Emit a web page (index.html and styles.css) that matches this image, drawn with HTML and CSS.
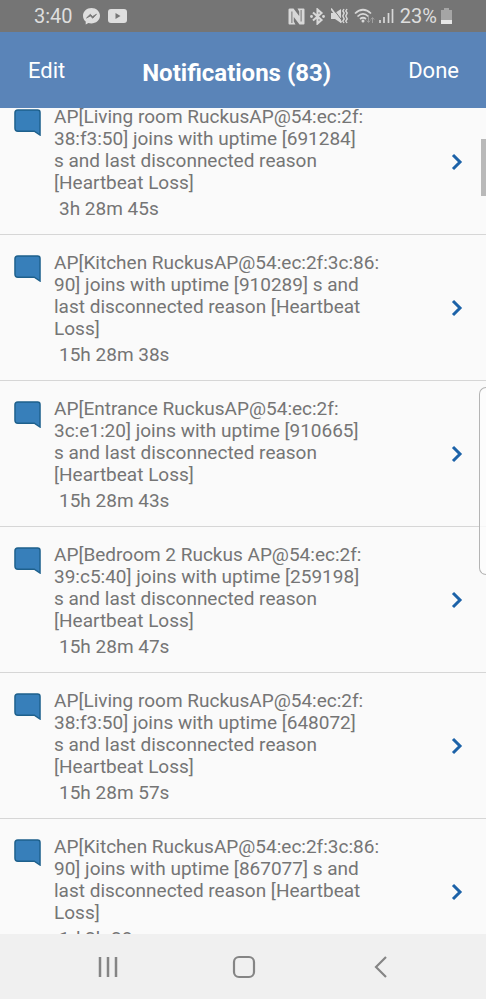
FILE: index.html
```html
<!DOCTYPE html>
<html lang="en">
<head>
<meta charset="utf-8">
<meta name="viewport" content="width=device-width, initial-scale=1">
<title>Notifications</title>
<link rel="stylesheet" href="styles.css">
</head>
<body>
<svg class="defs" aria-hidden="true">
  <symbol id="bubble" viewBox="0 0 28 28"><path d="M4 1H24.500Q27 1 27 3.500V27L21 23H4Q1 23 1 20V4Q1 1 4 1Z" fill="#377fba" stroke="#1e608c" stroke-width="1.500"/></symbol>
  <symbol id="chevron" viewBox="0 0 12 18"><path d="M2 2L9 9L2 16" fill="none" stroke="#1c62a8" stroke-width="3"/></symbol>
</svg>
<div class="status">
  <span class="status-text">3:40</span>
  <svg class="messenger" width="17" height="17" viewBox="0 0 17 17"><path d="M8.500 0C3.700 0 0 3.400 0 7.800C0 10.200 1 12.200 2.700 13.600V16.600L5.400 15.100C11.500 16.700 17 13 17 7.800C17 3.400 13.300 0 8.500 0Z" fill="#dedede"/><path d="M3.500 10L7.300 6.300L9.600 8.500L13.500 6.200L9.800 10.200L7.400 8Z" fill="#757575" stroke="#757575" stroke-width=".8"/></svg>
  <svg width="19" height="14" viewBox="0 0 19 14"><rect width="19" height="14" rx="3" fill="#dedede"/><path d="M7.500 4V10L12.500 7Z" fill="#757575"/></svg>
  <span class="spacer"></span>
  <svg width="17" height="17" viewBox="0 0 17 17"><path d="M2 .5H5.500L11.200 8V3.500L9.500 .5H15.500Q16.500 .5 16.500 1.500V15.500Q16.500 16.500 15.500 16.500H11.500L5.800 9V13.500L7.500 16.500H1.500Q.5 16.500 .5 15.500V1.500Q.5 .5 2 .5Z" fill="#d8d8d8"/><path d="M3.900 15V3.500M13.100 2V13.500" stroke="#757575" stroke-width="1"/></svg>
  <svg class="bluetooth" width="15" height="17" viewBox="0 0 15 17"><path d="M3 4.500L11.500 12L7.500 15.500V1.500L11.500 5L3 12.500" fill="none" stroke="#d8d8d8" stroke-width="2.100"/><circle cx="1.500" cy="8.500" r="1.400" fill="#d8d8d8"/><circle cx="13.500" cy="8.500" r="1.400" fill="#d8d8d8"/></svg>
  <svg class="mute" width="17" height="16" viewBox="0 0 17 16"><path d="M0 5H4L10 1V15L4 11H0Z" fill="#d8d8d8"/><path d="M1.500 0L11 12.500" stroke="#757575" stroke-width="1"/><path d="M0 .5L10.500 14.500" stroke="#d8d8d8" stroke-width="1.700"/><path d="M13 1L11.800 3L13.200 5L11.800 8L13.200 11L11.800 13L13 15M16 1L14.800 3L16.200 5L14.800 8L16.200 11L14.800 13L16 15" fill="none" stroke="#d8d8d8" stroke-width="1.400"/></svg>
  <svg class="wifi" width="21" height="16" viewBox="0 0 21 16"><path d="M1 5.500Q9 -2 17 5.500M3.500 8.500Q9 3 14.500 8.500M6 11Q9 8.500 12 11" fill="none" stroke="#d8d8d8" stroke-width="1.700"/><circle cx="9" cy="13" r="1.500" fill="#d8d8d8"/><path d="M14.500 9V14M12.800 12.500L14.500 14.500L16.200 12.500M18.500 15V10M16.800 11.500L18.500 9.500L20.200 11.500" fill="none" stroke="#a0a0a0"/></svg>
  <svg class="signal" width="15" height="16" viewBox="0 0 15 16"><path d="M1 12V15M5 9V15M9.500 5V15M13.500 1V15" stroke="#d8d8d8" stroke-width="1.700"/></svg>
  <span class="status-text">23%</span>
  <svg class="battery" width="11" height="16" viewBox="0 0 11 16"><path d="M0 2H3V0H8V2H11V16H0Z" fill="#a5a5a5"/><path d="M0 12H11V16H0Z" fill="#e6e6e6"/></svg>
</div>
<header class="bar">
  <button class="bar-button">Edit</button>
  <h1>Notifications (83)</h1>
  <button class="bar-button">Done</button>
</header>
<main class="viewport">
  <ul class="list">
    <li><a class="row" href="#"><svg class="bubble"><use href="#bubble"/></svg><div class="body"><p>AP[Living room RuckusAP@54:ec:2f:<br>38:f3:50] joins with uptime [691284]<br>s and last disconnected reason<br>[Heartbeat Loss]</p><time>3h 28m 45s</time></div><svg class="chevron"><use href="#chevron"/></svg></a></li>
    <li><a class="row" href="#"><svg class="bubble"><use href="#bubble"/></svg><div class="body"><p>AP[Kitchen RuckusAP@54:ec:2f:3c:86:<br>90] joins with uptime [910289] s and<br>last disconnected reason [Heartbeat<br>Loss]</p><time>15h 28m 38s</time></div><svg class="chevron"><use href="#chevron"/></svg></a></li>
    <li><a class="row" href="#"><svg class="bubble"><use href="#bubble"/></svg><div class="body"><p>AP[Entrance RuckusAP@54:ec:2f:<br>3c:e1:20] joins with uptime [910665]<br>s and last disconnected reason<br>[Heartbeat Loss]</p><time>15h 28m 43s</time></div><svg class="chevron"><use href="#chevron"/></svg></a></li>
    <li><a class="row" href="#"><svg class="bubble"><use href="#bubble"/></svg><div class="body"><p>AP[Bedroom 2 Ruckus AP@54:ec:2f:<br>39:c5:40] joins with uptime [259198]<br>s and last disconnected reason<br>[Heartbeat Loss]</p><time>15h 28m 47s</time></div><svg class="chevron"><use href="#chevron"/></svg></a></li>
    <li><a class="row" href="#"><svg class="bubble"><use href="#bubble"/></svg><div class="body"><p>AP[Living room RuckusAP@54:ec:2f:<br>38:f3:50] joins with uptime [648072]<br>s and last disconnected reason<br>[Heartbeat Loss]</p><time>15h 28m 57s</time></div><svg class="chevron"><use href="#chevron"/></svg></a></li>
    <li><a class="row" href="#"><svg class="bubble"><use href="#bubble"/></svg><div class="body"><p>AP[Kitchen RuckusAP@54:ec:2f:3c:86:<br>90] joins with uptime [867077] s and<br>last disconnected reason [Heartbeat<br>Loss]</p><time>1d 2h 28m</time></div><svg class="chevron"><use href="#chevron"/></svg></a></li>
  </ul>
  <div class="scroll-thumb"></div>
  <div class="edge-handle"></div>
</main>
<nav class="nav">
  <button aria-label="Recents"><svg width="24" height="24" viewBox="0 0 24 24"><path d="M4 2V22M12 2V22M20 2V22" stroke="#858585" stroke-width="2.500"/></svg></button>
  <button aria-label="Home"><svg width="24" height="24" viewBox="0 0 24 24"><rect x="2" y="2" width="20" height="20" rx="5" fill="none" stroke="#858585" stroke-width="2.200"/></svg></button>
  <button aria-label="Back"><svg width="24" height="24" viewBox="0 0 24 24"><path d="M17 2L7 12L17 22" fill="none" stroke="#858585" stroke-width="2.200"/></svg></button>
</nav>
</body>
</html>
```
FILE: styles.css
```css
* {
  box-sizing: border-box;
}

body {
  margin: 0;
  height: 100vh;
  display: flex;
  flex-direction: column;
  overflow: hidden;
  background: #fafafa;
  color: #757575;
  font-family: Roboto, "Liberation Sans", sans-serif;
}

svg {
  flex: none;
}

.defs {
  display: none;
}

button {
  border: 0;
  padding: 0;
  background: none;
  color: inherit;
  font: inherit;
}

.status {
  flex: none;
  height: 32px;
  padding: 0 34px;
  display: flex;
  align-items: center;
  background: #757575;
}

.status-text {
  color: #dedede;
  font-size: 20px;
  line-height: 32px;
}

.messenger {
  margin: 0 8px 0 10px;
}

.spacer {
  flex: 1;
}

.bluetooth {
  margin-left: 5px;
}

.mute,
.wifi {
  margin-left: 6px;
}

.signal {
  margin: 0 6px 0 4px;
}

.battery {
  margin-left: 4px;
}

.bar {
  flex: none;
  height: 76px;
  padding: 2px 27px 0 28px;
  display: flex;
  justify-content: space-between;
  align-items: center;
  background: #5a84b8;
  color: #fff;
}

.bar h1 {
  margin: 4px 0 0;
  font-size: 24px;
  line-height: 28px;
  font-weight: 700;
}

.bar-button {
  font-size: 22px;
  line-height: 28px;
}

.viewport {
  flex: 1;
  min-height: 0;
  position: relative;
  overflow: hidden;
}

.list {
  margin: -19px 0 0;
  padding: 0;
  list-style: none;
}

.row {
  display: flex;
  padding: 0 23px 0 14px;
  border-bottom: 1px solid #d6d6d6;
  color: inherit;
  text-decoration: none;
}

.bubble {
  width: 27px;
  height: 27px;
  margin: 20px 13px 0 0;
}

.body {
  flex: 1;
  padding: 17px 0 14px;
  font-size: 19px;
  line-height: 22px;
  white-space: nowrap;
}

.body p {
  margin: 0;
}

.body time {
  display: block;
  margin-top: 4px;
  padding-left: 5px;
}

.chevron {
  align-self: center;
  width: 12px;
  height: 18px;
}

.scroll-thumb {
  position: absolute;
  top: 31px;
  right: 0;
  width: 5px;
  height: 57px;
  background: #b9b9b9;
}

.edge-handle {
  position: absolute;
  top: 279px;
  right: 0;
  width: 7px;
  height: 188px;
  border: 1px solid #b4b4b4;
  border-right: 0;
  border-radius: 8px 0 0 8px;
  background: #fcfcfcd0;
}

.nav {
  flex: none;
  height: 65px;
  padding: 0 37px 0 40px;
  display: grid;
  grid-template-columns: repeat(3, 1fr);
  place-items: center;
  background: #f0f0f0;
}

.nav svg {
  display: block;
}
```
